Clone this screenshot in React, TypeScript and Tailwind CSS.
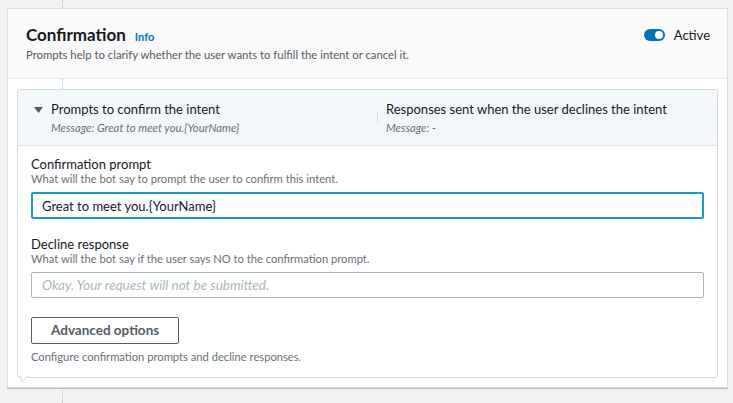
import { useState } from "react";

const font = { fontFamily: "Lato, 'Noto Sans', sans-serif" };

const Toggle = ({ on }: { on: boolean }) => (
  <span className={`relative inline-flex h-[12px] w-[21px] items-center rounded-full ${on ? "bg-[#0073bb]" : "bg-[#879596]"}`}>
    <span className={`absolute h-[8px] w-[8px] rounded-full bg-white ${on ? "right-[2px]" : "left-[2px]"}`} />
  </span>
);

const Connector = ({ className }: { className: string }) => (
  <div className={`border-l border-dotted border-[#a9c7d8] ${className}`} />
);

export default function App() {
  const [prompt, setPrompt] = useState("Great to meet you.{YourName}");
  const [decline, setDecline] = useState("");

  return (
    <div style={font} className="flex h-[403px] w-[733px] flex-col overflow-hidden bg-[#f2f2f2] text-[#16191f]">
      <Connector className="ml-[62px] h-[8px] shrink-0" />

      {/* outer card */}
      <div className="ml-[7px] mr-[5px] shrink-0 border border-[#dddddd] bg-white shadow-[0_1px_0_#b8bcbc]">
        {/* header */}
        <div className="flex items-start justify-between border-b border-[#e6e8e8] bg-[#fafafa] pb-[15px] pl-[18px] pr-[17px] pt-[14px]">
          <div>
            <div className="flex items-baseline gap-[9px]">
              <h2 className="text-[17px] font-bold leading-[24px]">Confirmation</h2>
              <a href="#" className="text-[11px] font-bold text-[#0073bb]">Info</a>
            </div>
            <p className="text-[11.3px] leading-[16px] text-[#545b64]">
              Prompts help to clarify whether the user wants to fulfill the intent or cancel it.
            </p>
          </div>
          <div className="flex items-center gap-[9px] pt-[3px]">
            <Toggle on />
            <span className="text-[13px] leading-[18px] text-[#16191f]">Active</span>
          </div>
        </div>

        <Connector className="ml-[54px] h-[10px]" />

        {/* inner card */}
        <div className="relative mx-[9px] mb-[9px] rounded-[3px] border border-[#d5dbdb]">
          <div className="flex rounded-t-[3px] border-b border-[#e6e8e8] bg-[#f1f7fb] pb-[10px] pt-[11px]">
            <div className="flex w-[359px] gap-[8px] pl-[16px]">
              <svg width="9" height="6" viewBox="0 0 9 6" className="mt-[6px] shrink-0">
                <path d="M0 0 H9 L4.5 6 Z" fill="#545b64" />
              </svg>
              <div>
                <div className="text-[13px] leading-[16px]">Prompts to confirm the intent</div>
                <div className="mt-[4px] text-[11.3px] italic leading-[14px] text-[#687078]">Message: Great to meet you.{"{YourName}"}</div>
              </div>
            </div>
            <div className="flex items-center">
              <div className="h-[10px] w-px bg-[#d5dbdb]" />
            </div>
            <div className="pl-[8px]">
              <div className="text-[13px] leading-[16px]">Responses sent when the user declines the intent</div>
              <div className="mt-[4px] text-[11.3px] italic leading-[14px] text-[#687078]">Message: -</div>
            </div>
          </div>

          <div className="px-[13px] pb-[13px] pt-[10px]">
            <label className="block text-[13px] leading-[16px]">Confirmation prompt</label>
            <p className="text-[11.2px] leading-[14px] text-[#687078]">What will the bot say to prompt the user to confirm this intent.</p>
            <input
              value={prompt}
              onChange={(e) => setPrompt(e.target.value)}
              className="mt-[6px] h-[27px] w-full rounded-[2px] border-2 border-[#1a9cbc] bg-white px-[9px] text-[13px] text-[#16191f] outline-none"
              style={font}
            />

            <label className="mt-[17px] block text-[13px] leading-[16px]">Decline response</label>
            <p className="text-[11.2px] leading-[14px] text-[#687078]">What will the bot say if the user says NO to the confirmation prompt.</p>
            <input
              value={decline}
              onChange={(e) => setDecline(e.target.value)}
              placeholder="Okay. Your request will not be submitted."
              className="mt-[6px] h-[26px] w-full rounded-[2px] border border-[#aab7b8] bg-white px-[10px] text-[13.5px] italic placeholder:text-[#aab7b8] outline-none"
              style={font}
            />

            <button className="mt-[19px] h-[27px] rounded-[2px] border border-[#545b64] bg-white px-[19px] text-[13.5px] font-bold text-[#545b64]">
              Advanced options
            </button>
            <p className="mt-[6px] text-[11.2px] leading-[14px] text-[#687078]">Configure confirmation prompts and decline responses.</p>
          </div>

          {/* little tail at the bottom left */}
          <svg width="10" height="7" viewBox="0 0 10 7" className="absolute -bottom-[6px] left-[2px]">
            <path d="M0.5 0 L1.5 6 L8 0" fill="white" stroke="#d5dbdb" strokeWidth="1" />
          </svg>
        </div>
      </div>

      <Connector className="ml-[62px] flex-1" />
    </div>
  );
}
